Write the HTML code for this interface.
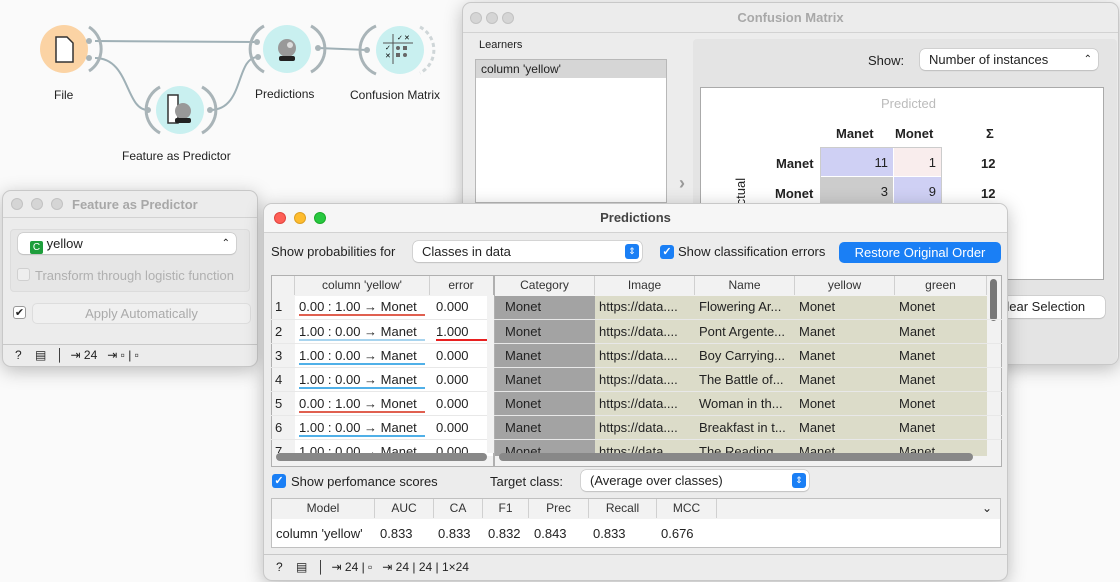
<!DOCTYPE html>
<html><head><meta charset="utf-8"><style>
*{box-sizing:border-box;margin:0;padding:0}
body{width:1120px;height:582px;background:#fafafa;font-family:"Liberation Sans",sans-serif;font-size:13px;color:#222;position:relative;overflow:hidden}
.a{position:absolute}
.win{position:absolute;background:#ececec;border:1px solid #c8c8c8;border-radius:9px;overflow:hidden;box-shadow:0 4px 18px rgba(0,0,0,.25)}
.tb{position:absolute;left:0;right:0;top:0;border-bottom:1px solid #d2d2d2;text-align:center;font-weight:bold;color:#a8a8a8}
.dot{position:absolute;width:12px;height:12px;border-radius:50%;background:#d5d5d5;border:1px solid #c2c2c2}
.combo{position:absolute;background:#fff;border-radius:5px;box-shadow:0 0 0 .5px #bbb,0 1px 1px rgba(0,0,0,.15);padding-left:9px}
.cb{position:absolute;width:14px;height:14px;border-radius:3px;background:#1a7ff5;color:#fff;font-size:11px;line-height:14px;text-align:center;font-weight:bold}
.cell{position:absolute;height:23px;line-height:23px;white-space:nowrap;overflow:hidden}
.hd{position:absolute;height:19px;line-height:19px;text-align:center;font-size:12px;color:#333;border-right:1px solid #d0d0d0}
.lbl{position:absolute;font-size:12px;color:#222;text-align:center;white-space:nowrap}
</style></head><body>

<svg class="a" style="left:0;top:0" width="460" height="180">
<g fill="none" stroke="#9fb0b6" stroke-width="2">
<path d="M95 41 L257 42"/>
<path d="M95 58 C130 58,125 110,148 110"/>
<path d="M210 110 C245 110,235 57,258 57"/>
<path d="M318 48 L367 50"/>
</g>
<g fill="none" stroke="#a9b4b8" stroke-width="3">
<path d="M89 27 A26 26 0 0 1 89 71"/>
<path d="M160 87 A26 26 0 0 0 160 133"/>
<path d="M202 87 A26 26 0 0 1 202 133"/>
<path d="M264 26 A26 26 0 0 0 264 72"/>
<path d="M311 26 A26 26 0 0 1 311 72"/>
<path d="M376 26 A26 26 0 0 0 376 74"/>
<path d="M420 27 A26 26 0 0 1 420 73" stroke="#cfd6d8" stroke-dasharray="4 3"/>
</g>
<circle cx="64" cy="49" r="24" fill="#fbd3a4"/>
<path d="M56 37 h11 l6 6 v19 h-17 z" fill="#fff" stroke="#333" stroke-width="1.5"/>
<circle cx="180" cy="110" r="24" fill="#c9f0f0"/>
<rect x="168" y="95" width="10" height="28" fill="#fff" stroke="#333" stroke-width="1.5"/>
<circle cx="183" cy="111" r="8" fill="#999"/><rect x="175" y="118" width="16" height="5" rx="2" fill="#222"/>
<circle cx="287" cy="49" r="24" fill="#c9f0f0"/>
<circle cx="287" cy="48" r="9" fill="#999"/><circle cx="290" cy="45" r="3" fill="#ddd"/><rect x="279" y="56" width="16" height="5" rx="2" fill="#222"/>
<circle cx="400" cy="50" r="24" fill="#c9f0f0"/>
<g stroke="#555" stroke-width="1"><path d="M383 43 h30 M393 34 v30"/></g>
<g fill="#666"><circle cx="398" cy="48" r="2"/><rect x="403" y="46" width="4" height="4"/><rect x="396" y="53" width="4" height="4"/><circle cx="405" cy="55" r="2"/></g>
<text x="397" y="40" font-size="7">✓</text><text x="404" y="40" font-size="7">✕</text><text x="385" y="50" font-size="7">✓</text><text x="385" y="58" font-size="7">✕</text>
<circle cx="89" cy="41" r="3" fill="#a9b4b8"/><circle cx="89" cy="58" r="3" fill="#a9b4b8"/>
<circle cx="148" cy="110" r="3" fill="#a9b4b8"/><circle cx="210" cy="110" r="3" fill="#a9b4b8"/>
<circle cx="257" cy="42" r="3" fill="#a9b4b8"/><circle cx="258" cy="57" r="3" fill="#a9b4b8"/>
<circle cx="318" cy="48" r="3" fill="#a9b4b8"/><circle cx="367" cy="50" r="3" fill="#a9b4b8"/>
</svg>
<div class="lbl" style="left:54px;top:88px">File</div>
<div class="lbl" style="left:122px;top:149px">Feature as Predictor</div>
<div class="lbl" style="left:255px;top:87px">Predictions</div>
<div class="lbl" style="left:350px;top:88px">Confusion Matrix</div>

<div class="win" style="left:462px;top:2px;width:657px;height:363px">
<div class="tb" style="height:30px;line-height:30px">Confusion Matrix</div>
<div class="dot" style="left:7px;top:9px"></div><div class="dot" style="left:23px;top:9px"></div><div class="dot" style="left:39px;top:9px"></div>
<div class="a" style="left:16px;top:36px;font-size:11px">Learners</div>
<div class="a" style="left:12px;top:56px;width:192px;height:144px;background:#fff;border:1px solid #b8b8b8">
<div style="background:#d6d6d6;height:18px;line-height:18px;padding-left:5px;font-size:12px">column 'yellow'</div></div>
<div class="a" style="left:216px;top:170px;font-size:18px;color:#999;font-weight:bold">›</div>
<div class="a" style="left:230px;top:36px;width:424px;height:330px;background:#e4e4e4;border-radius:4px"></div>
<div class="a" style="left:405px;top:50px">Show:</div>
<div class="combo" style="left:457px;top:46px;width:178px;height:21px;line-height:21px">Number of instances<span style="position:absolute;right:6px;font-size:10px">⌃</span></div>
<div class="a" style="left:237px;top:84px;width:404px;height:193px;background:#fff;border:1px solid #aaa">
<div class="a" style="left:180px;top:8px;color:#bbb">Predicted</div>
<div class="a" style="left:135px;top:38px;font-weight:bold">Manet</div>
<div class="a" style="left:194px;top:38px;font-weight:bold">Monet</div>
<div class="a" style="left:285px;top:38px;font-weight:bold">Σ</div>
<div class="a" style="left:75px;top:68px;font-weight:bold">Manet</div>
<div class="a" style="left:74px;top:98px;font-weight:bold">Monet</div>
<div class="a" style="left:119px;top:59px;width:122px;height:60px;border:1px solid #ccc"></div>
<div class="a" style="left:120px;top:60px;width:72px;height:28px;background:#cfd0f4;text-align:right;padding:7px 5px 0 0">11</div>
<div class="a" style="left:193px;top:60px;width:47px;height:28px;background:#f9eded;text-align:right;padding:7px 5px 0 0">1</div>
<div class="a" style="left:120px;top:89px;width:72px;height:28px;background:#cccccc;text-align:right;padding:7px 5px 0 0">3</div>
<div class="a" style="left:193px;top:89px;width:47px;height:28px;background:#cfd0f4;text-align:right;padding:7px 5px 0 0">9</div>
<div class="a" style="left:280px;top:68px;font-weight:bold">12</div>
<div class="a" style="left:280px;top:98px;font-weight:bold">12</div>
<div class="a" style="left:32px;top:126px;transform:rotate(-90deg);transform-origin:left top;font-size:13px">Actual</div>
</div>
<div class="combo" style="left:520px;top:293px;width:122px;height:22px;line-height:22px;padding-left:14px">Clear Selection</div>
</div>

<div class="win" style="left:2px;top:190px;width:256px;height:177px">
<div class="tb" style="height:27px;line-height:27px;text-align:left;padding-left:69px">Feature as Predictor</div>
<div class="dot" style="left:8px;top:7px"></div><div class="dot" style="left:28px;top:7px"></div><div class="dot" style="left:48px;top:7px"></div>
<div class="a" style="left:7px;top:38px;width:240px;height:63px;background:#e6e6e6;border:1px solid #dcdcdc;border-radius:4px"></div>
<div class="combo" style="left:15px;top:42px;width:218px;height:21px;line-height:21px;padding-left:12px"><span style="display:inline-block;width:13px;height:13px;background:#1e9e3c;color:#fff;font-size:10px;line-height:13px;text-align:center;border-radius:2px;vertical-align:-2px">C</span> yellow<span style="position:absolute;right:6px;font-size:10px">⌃</span></div>
<div class="a" style="left:14px;top:77px;width:13px;height:13px;border:1px solid #d0d0d0;border-radius:3px;background:#eee"></div>
<div class="a" style="left:32px;top:77px;color:#b0b0b0">Transform through logistic function</div>
<div class="a" style="left:10px;top:115px;width:13px;height:13px;border:1px solid #999;border-radius:3px;background:#fff;font-size:11px;line-height:12px;text-align:center">✔</div>
<div class="a" style="left:29px;top:112px;width:219px;height:21px;border-radius:5px;background:#f0f0f0;border:1px solid #ddd;text-align:center;line-height:19px;color:#aaa">Apply Automatically</div>
<div class="a" style="left:0;top:153px;width:256px;border-top:1px solid #c8c8c8"></div>
<div class="a" style="left:12px;top:157px;font-size:12px">?&nbsp;&nbsp;&nbsp;&nbsp;▤&nbsp;&nbsp;&nbsp;│&nbsp;&nbsp;⇥ 24&nbsp;&nbsp;&nbsp;⇥ ▫ | ▫</div>
</div>

<div class="win" style="left:263px;top:203px;width:745px;height:378px;background:#ececec">
<div class="tb" style="height:29px;line-height:28px;color:#444;background:#f6f6f6">Predictions</div>
<div class="dot" style="left:10px;top:8px;background:#fe5f57;border-color:#e0443e"></div>
<div class="dot" style="left:30px;top:8px;background:#febc2e;border-color:#dea123"></div>
<div class="dot" style="left:50px;top:8px;background:#28c840;border-color:#1aab29"></div>
<div class="a" style="left:7px;top:40px">Show probabilities for</div>
<div class="combo" style="left:149px;top:37px;width:229px;height:21px;line-height:21px;padding-left:9px">Classes in data<span style="position:absolute;right:3px;top:3px;width:14px;height:15px;background:#1a7ff5;border-radius:3px;color:#fff;font-size:9px;line-height:15px;text-align:center">⇕</span></div>
<div class="cb" style="left:396px;top:41px">✓</div>
<div class="a" style="left:414px;top:40px">Show classification errors</div>
<div class="a" style="left:575px;top:38px;width:162px;height:21px;background:#1a7ff5;border-radius:5px;color:#fff;text-align:center;line-height:21px">Restore Original Order</div>

<div class="a" style="left:7px;top:71px;width:223px;height:192px;background:#f2f2f2;border:1px solid #b0b0b0;overflow:hidden">
<div class="hd" style="left:0;top:0;width:23px"></div>
<div class="hd" style="left:23px;top:0;width:135px">column 'yellow'</div>
<div class="hd" style="left:158px;top:0;width:62px;border:0">error</div>
<div class="a" style="left:23px;top:20px;width:200px;height:160px;background:#fff"></div>
</div>
<div class="a" style="left:230px;top:71px;width:508px;height:192px;background:#f2f2f2;border:1px solid #b0b0b0;overflow:hidden">
<div class="hd" style="left:0;top:0;width:100px">Category</div>
<div class="hd" style="left:100px;top:0;width:100px">Image</div>
<div class="hd" style="left:200px;top:0;width:100px">Name</div>
<div class="hd" style="left:300px;top:0;width:100px">yellow</div>
<div class="hd" style="left:400px;top:0;width:92px">green</div>
<div class="a" style="left:0;top:20px;width:100px;height:160px;background:#a3a3a3"></div>
<div class="a" style="left:100px;top:20px;width:392px;height:160px;background:#dcdcc9"></div>
<div class="a" style="left:495px;top:3px;width:7px;height:42px;background:#777;border-radius:4px"></div>
</div>

<div class="a" style="left:7px;top:91px;width:731px;height:158px;overflow:hidden">
<div class="a" style="left:0;top:0;width:731px">
 <div style="position:relative;height:24px"><span class="cell" style="left:4px">1</span><span class="cell" style="left:28px;width:126px;border-bottom:2px solid #e06050;height:21px">0.00 : 1.00 → Monet</span><span class="cell" style="left:165px">0.000</span><span class="cell" style="left:228px;padding-left:6px">Monet</span><span class="cell" style="left:328px">https://data....</span><span class="cell" style="left:428px">Flowering Ar...</span><span class="cell" style="left:528px">Monet</span><span class="cell" style="left:628px">Monet</span></div>
 <div style="position:relative;height:24px;border-top:1px solid #e8e8e8"><span class="cell" style="left:4px">2</span><span class="cell" style="left:28px;width:126px;border-bottom:2px solid #a8d4ee;height:21px">1.00 : 0.00 → Manet</span><span class="cell" style="left:165px;width:52px;border-bottom:2px solid #e82020;height:21px">1.000</span><span class="cell" style="left:228px;padding-left:6px">Monet</span><span class="cell" style="left:328px">https://data....</span><span class="cell" style="left:428px">Pont Argente...</span><span class="cell" style="left:528px">Manet</span><span class="cell" style="left:628px">Manet</span></div>
 <div style="position:relative;height:24px;border-top:1px solid #e8e8e8"><span class="cell" style="left:4px">3</span><span class="cell" style="left:28px;width:126px;border-bottom:2px solid #50b0e8;height:21px">1.00 : 0.00 → Manet</span><span class="cell" style="left:165px">0.000</span><span class="cell" style="left:228px;padding-left:6px">Manet</span><span class="cell" style="left:328px">https://data....</span><span class="cell" style="left:428px">Boy Carrying...</span><span class="cell" style="left:528px">Manet</span><span class="cell" style="left:628px">Manet</span></div>
 <div style="position:relative;height:24px;border-top:1px solid #e8e8e8"><span class="cell" style="left:4px">4</span><span class="cell" style="left:28px;width:126px;border-bottom:2px solid #50b0e8;height:21px">1.00 : 0.00 → Manet</span><span class="cell" style="left:165px">0.000</span><span class="cell" style="left:228px;padding-left:6px">Manet</span><span class="cell" style="left:328px">https://data....</span><span class="cell" style="left:428px">The Battle of...</span><span class="cell" style="left:528px">Manet</span><span class="cell" style="left:628px">Manet</span></div>
 <div style="position:relative;height:24px;border-top:1px solid #e8e8e8"><span class="cell" style="left:4px">5</span><span class="cell" style="left:28px;width:126px;border-bottom:2px solid #e06050;height:21px">0.00 : 1.00 → Monet</span><span class="cell" style="left:165px">0.000</span><span class="cell" style="left:228px;padding-left:6px">Monet</span><span class="cell" style="left:328px">https://data....</span><span class="cell" style="left:428px">Woman in th...</span><span class="cell" style="left:528px">Monet</span><span class="cell" style="left:628px">Monet</span></div>
 <div style="position:relative;height:24px;border-top:1px solid #e8e8e8"><span class="cell" style="left:4px">6</span><span class="cell" style="left:28px;width:126px;border-bottom:2px solid #50b0e8;height:21px">1.00 : 0.00 → Manet</span><span class="cell" style="left:165px">0.000</span><span class="cell" style="left:228px;padding-left:6px">Manet</span><span class="cell" style="left:328px">https://data....</span><span class="cell" style="left:428px">Breakfast in t...</span><span class="cell" style="left:528px">Manet</span><span class="cell" style="left:628px">Manet</span></div>
 <div style="position:relative;height:24px;border-top:1px solid #e8e8e8"><span class="cell" style="left:4px">7</span><span class="cell" style="left:28px">1.00 : 0.00 → Manet</span><span class="cell" style="left:165px">0.000</span><span class="cell" style="left:228px;padding-left:6px">Monet</span><span class="cell" style="left:328px">https://data....</span><span class="cell" style="left:428px">The Reading</span><span class="cell" style="left:528px">Manet</span><span class="cell" style="left:628px">Manet</span></div>
</div>
<div class="a" style="left:216px;top:0;width:7px;height:160px;background:#f2f2f2"></div>
</div>
<div class="a" style="left:12px;top:249px;width:211px;height:8px;background:#888;border-radius:4px"></div>
<div class="a" style="left:235px;top:249px;width:474px;height:8px;background:#888;border-radius:4px"></div>

<div class="cb" style="left:8px;top:270px">✓</div>
<div class="a" style="left:27px;top:270px">Show perfomance scores</div>
<div class="a" style="left:226px;top:270px">Target class:</div>
<div class="combo" style="left:317px;top:266px;width:228px;height:21px;line-height:21px;padding-left:9px">(Average over classes)<span style="position:absolute;right:3px;top:3px;width:14px;height:15px;background:#1a7ff5;border-radius:3px;color:#fff;font-size:9px;line-height:15px;text-align:center">⇕</span></div>
<div class="a" style="left:7px;top:294px;width:730px;height:50px;background:#fff;border:1px solid #c0c0c0">
<div class="a" style="left:0;top:0;width:728px;height:20px;background:#f2f2f2"></div>
<div class="hd" style="left:0;top:0;width:103px">Model</div>
<div class="hd" style="left:103px;top:0;width:59px">AUC</div>
<div class="hd" style="left:162px;top:0;width:49px">CA</div>
<div class="hd" style="left:211px;top:0;width:46px">F1</div>
<div class="hd" style="left:257px;top:0;width:60px">Prec</div>
<div class="hd" style="left:317px;top:0;width:68px">Recall</div>
<div class="hd" style="left:385px;top:0;width:60px">MCC</div>
<div class="a" style="left:710px;top:2px;font-size:12px">⌄</div>
<div class="a" style="left:4px;top:27px">column 'yellow'</div>
<div class="a" style="left:108px;top:27px">0.833</div>
<div class="a" style="left:166px;top:27px">0.833</div>
<div class="a" style="left:216px;top:27px">0.832</div>
<div class="a" style="left:262px;top:27px">0.843</div>
<div class="a" style="left:321px;top:27px">0.833</div>
<div class="a" style="left:389px;top:27px">0.676</div>
</div>
<div class="a" style="left:0;top:350px;width:745px;border-top:1px solid #c8c8c8"></div>
<div class="a" style="left:12px;top:356px;font-size:12px">?&nbsp;&nbsp;&nbsp;&nbsp;▤&nbsp;&nbsp;&nbsp;│&nbsp;&nbsp;⇥ 24 | ▫&nbsp;&nbsp;&nbsp;⇥ 24 | 24 | 1×24</div>
</div>
</body></html>
